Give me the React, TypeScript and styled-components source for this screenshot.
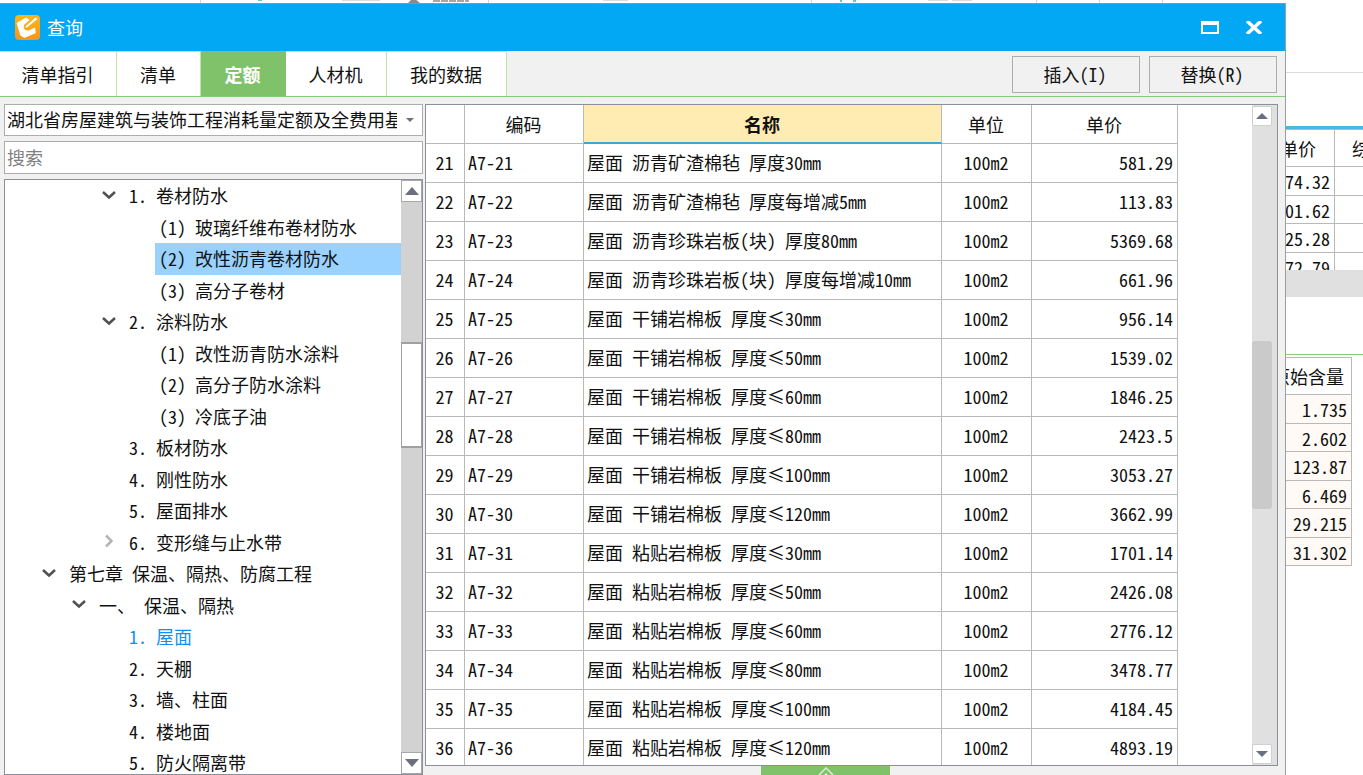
import React from 'react';
import styled, { createGlobalStyle, css } from 'styled-components';

const Global = createGlobalStyle`
  * { box-sizing: border-box; }
  body { margin: 0; background: #fff; overflow: hidden; }
  body, button, input, select, table {
    font-family: "Noto Sans CJK SC", "Liberation Sans", sans-serif;
    font-size: 18px;
    line-height: 24px;
    color: #111;
  }
`;

const Page = styled.div`
  display: grid;
  grid-template-columns: minmax(0, 1fr) 77px;
  grid-template-rows: 3px minmax(0, 1fr);
  height: 100vh;
`;

const Ribbon = styled.div`
  grid-column: 1 / -1;
  overflow: hidden;
  svg { display: block; }
`;

/* ---------- text with half-width latin ---------- */

const Latin = styled.span`
  font-feature-settings: "hwid";
  white-space: pre;
`;

function Mixed({ children }: { children: string }) {
  const runs = children.match(/[\x20-\x7e]+|[^\x20-\x7e]+/g) ?? [];
  return <>{runs.map((r, i) => (/^[\x20-\x7e]/.test(r) ? <Latin key={i}>{r}</Latin> : r))}</>;
}

/* ---------- query window ---------- */

const Window = styled.main`
  display: flex;
  flex-direction: column;
  min-width: 0;
  overflow: hidden;
  background: #f1f1f1;
  border-top: 1px solid #8796a3;
  border-right: 1px solid #9a9fa5;
`;

const TitleBar = styled.header`
  flex: none;
  display: flex;
  align-items: center;
  gap: 7px;
  height: 47px;
  padding: 0 22px 0 15px;
  background: #02a8f3;
  color: #fff;
`;

const Title = styled.h1`
  flex: 1;
  margin: 0;
  padding-bottom: 2px;
  font-size: 18px;
  font-weight: 400;
`;

const WindowButton = styled.button`
  display: flex;
  padding: 0;
  margin-left: 19px;
  border: 0;
  background: none;
`;

const TabBar = styled.nav`
  flex: none;
  display: flex;
  height: 46px;
  padding-right: 8px;
  border-bottom: 1px solid #86cb78;
`;

const Tab = styled.button<{ $width: number; $active?: boolean }>`
  width: ${(p) => p.$width}px;
  padding: 0 1px 0 0;
  border: 0;
  border-top: 1px solid #b9e6a8;
  border-right: 1px solid #b9e6a8;
  background: #fff;
  ${(p) =>
    p.$active &&
    css`
      background: #7fc269;
      border-color: #7fc269;
      color: #fff;
      font-weight: 700;
    `}
`;

const Actions = styled.div`
  display: flex;
  gap: 9px;
  margin: 5px 0 3px auto;
`;

const Action = styled.button`
  width: 128px;
  padding: 0 2px 2px 0;
  border: 1px solid #adadad;
  background: #f1f1f1;
`;

const Body = styled.div`
  flex: 1;
  min-height: 0;
  display: flex;
  gap: 2px;
  padding: 7px 7px 0 4px;
`;

const Sidebar = styled.aside`
  flex: none;
  width: 419px;
  display: flex;
  flex-direction: column;
  gap: 5px;
`;

const SelectBox = styled.div`
  display: grid;
  align-items: center;
  background: #fff;
  border: 1px solid #adadad;
  > * { grid-area: 1 / 1; }
  svg { justify-self: end; margin-right: 8px; pointer-events: none; }
`;

const Select = styled.select`
  width: 100%;
  height: 30px;
  padding: 0 25px 2px 2px;
  border: 0;
  appearance: none;
  background: transparent;
`;

const Search = styled.input`
  height: 33px;
  padding: 0 2px 2px;
  border: 1px solid #adadad;
  border-radius: 0;
  background: #fff;
  &::placeholder { color: #808080; opacity: 1; }
`;

const TreePanel = styled.div`
  flex: 1;
  min-height: 0;
  display: flex;
  overflow: hidden;
  border: 1px solid #8b909c;
`;

const Tree = styled.ul`
  flex: 1;
  margin: 0;
  padding: 0;
  list-style: none;
  overflow: hidden;
  background: #fff;
`;

const TreeRow = styled.li<{ $level: number; $current?: boolean }>`
  display: flex;
  height: 31px;
  padding-left: ${(p) => p.$level * 30 + 37}px;
  color: ${(p) => (p.$current ? '#1090f5' : 'inherit')};
  &:nth-child(odd) { height: 32px; }
`;

const Toggle = styled.span`
  flex: none;
  width: 23px;
  display: flex;
  align-items: center;
  padding-bottom: 3px;
`;

const Label = styled.span<{ $selected?: boolean }>`
  flex: 1;
  padding: 3px 0 0 4px;
  white-space: nowrap;
  background: ${(p) => (p.$selected ? '#99d1ff' : 'transparent')};
`;

const TreeScroll = styled.div`
  flex: none;
  width: 21px;
  display: flex;
  flex-direction: column;
  background: #d2d2d2;
`;

const TreeArrow = styled.button`
  display: grid;
  place-items: center;
  height: 22px;
  padding: 0;
  border: 1px solid #a8a8a8;
  background: #fff;
`;

const TreeThumb = styled.div`
  height: 106px;
  margin: 140px 0 auto;
  background: #fff;
  border: 1px solid #a0a0a0;
  border-width: 2px 1px;
`;

const Main = styled.section`
  flex: 1;
  min-width: 0;
  display: flex;
  flex-direction: column;
`;

const TablePanel = styled.div`
  flex: 1;
  min-height: 0;
  display: flex;
  overflow: hidden;
  background: #fff;
  border: 1px solid #8b909c;
`;

const TableArea = styled.div`
  flex: 1;
  min-width: 0;
  overflow: hidden;
  padding-right: 74px;
`;

const Table = styled.table`
  width: 100%;
  table-layout: fixed;
  border-collapse: separate;
  border-spacing: 0;
`;

const Head = styled.th<{ $sorted?: boolean }>`
  height: 39px;
  padding: 0 1px 0 0;
  font-weight: 400;
  border-right: 1px solid #b9b9b9;
  border-bottom: 1px solid #b9b9b9;
  ${(p) =>
    p.$sorted &&
    css`
      font-weight: 700;
      background: #ffecb3;
      border-bottom: 2px solid #36a9d8;
    `}
`;

const Cell = styled.td<{ $align?: string }>`
  height: 39px;
  padding: 0 4px 2px 3px;
  overflow: hidden;
  white-space: nowrap;
  text-align: ${(p) => p.$align ?? 'left'};
  border-right: 1px solid #b9b9b9;
  border-bottom: 1px solid #b9b9b9;
`;

const TableScroll = styled.div`
  flex: none;
  width: 25px;
  display: flex;
  flex-direction: column;
  padding: 1px 5px 1px 0;
  background: #e0e0e0;
`;

const TableArrow = styled.button`
  display: grid;
  place-items: center;
  height: 20px;
  padding: 0;
  border: 1px solid #d0d0d0;
  border-radius: 2px;
  background: #fff;
`;

const TableThumb = styled.div`
  height: 168px;
  margin: 215px 0 auto;
  border-radius: 3px;
  background: #cacaca;
`;

const Expander = styled.button`
  flex: none;
  display: flex;
  justify-content: center;
  width: 129px;
  height: 9px;
  margin-left: 336px;
  padding: 1px 0 0;
  border: 0;
  overflow: hidden;
  background: #7fc269;
  svg { flex: none; }
`;

/* ---------- project page behind ---------- */

const Behind = styled.aside`
  display: flex;
  flex-direction: column;
  overflow: hidden;
`;

const Blank = styled.div<{ $height: number; $line?: string }>`
  flex: none;
  height: ${(p) => p.$height}px;
  border-bottom: ${(p) => (p.$line ? `1px solid ${p.$line}` : 'none')};
`;

const Clip = styled.div<{ $height?: number; $accent?: boolean }>`
  flex: none;
  height: ${(p) => (p.$height ? `${p.$height}px` : 'auto')};
  display: flex;
  align-items: flex-start;
  overflow: hidden;
  border-top: ${(p) => (p.$accent ? '3px solid #4bb8e2' : 'none')};
`;

const PriceTable = styled.table`
  flex: none;
  width: 120px;
  margin-left: -71px;
  table-layout: fixed;
  border-collapse: separate;
  border-spacing: 0;
  border-top: 1px solid #b9b9b9;
`;

const AmountTable = styled(PriceTable)`
  margin-left: -54px;
`;

const RestTable = styled(PriceTable)`
  margin-left: 0;
`;

const SideHead = styled.th<{ $pad: number }>`
  height: 37px;
  padding: 0 ${(p) => p.$pad}px 0 0;
  text-align: right;
  white-space: nowrap;
  font-weight: 400;
  border-right: 1px solid #b9b9b9;
  border-bottom: 1px solid #b9b9b9;
`;

const SideCell = styled.td<{ $tint?: boolean }>`
  height: 29px;
  padding: 0 4px;
  text-align: right;
  border-right: 1px solid #b9b9b9;
  border-bottom: 1px solid #b9b9b9;
  background: ${(p) => (p.$tint ? '#fffaf5' : '#fff')};
  tr:nth-child(even) > & { height: 28px; }
`;

const GreyBand = styled.div`
  flex: none;
  height: 27px;
  background: #e0e0e0;
`;

/* ---------- data ---------- */

type Node = { level: number; text: string; open?: boolean; closed?: boolean; selected?: boolean; current?: boolean };

const nodes: Node[] = [
  { level: 2, text: '1. 卷材防水', open: true },
  { level: 3, text: '(1) 玻璃纤维布卷材防水' },
  { level: 3, text: '(2) 改性沥青卷材防水', selected: true },
  { level: 3, text: '(3) 高分子卷材' },
  { level: 2, text: '2. 涂料防水', open: true },
  { level: 3, text: '(1) 改性沥青防水涂料' },
  { level: 3, text: '(2) 高分子防水涂料' },
  { level: 3, text: '(3) 冷底子油' },
  { level: 2, text: '3. 板材防水' },
  { level: 2, text: '4. 刚性防水' },
  { level: 2, text: '5. 屋面排水' },
  { level: 2, text: '6. 变形缝与止水带', closed: true },
  { level: 0, text: '第七章 保温、隔热、防腐工程', open: true },
  { level: 1, text: '一、 保温、隔热', open: true },
  { level: 2, text: '1. 屋面', current: true },
  { level: 2, text: '2. 天棚' },
  { level: 2, text: '3. 墙、柱面' },
  { level: 2, text: '4. 楼地面' },
  { level: 2, text: '5. 防火隔离带' },
];

const items: [string, string][] = [
  ['屋面 沥青矿渣棉毡 厚度30mm', '581.29'],
  ['屋面 沥青矿渣棉毡 厚度每增减5mm', '113.83'],
  ['屋面 沥青珍珠岩板(块) 厚度80mm', '5369.68'],
  ['屋面 沥青珍珠岩板(块) 厚度每增减10mm', '661.96'],
  ['屋面 干铺岩棉板 厚度≤30mm', '956.14'],
  ['屋面 干铺岩棉板 厚度≤50mm', '1539.02'],
  ['屋面 干铺岩棉板 厚度≤60mm', '1846.25'],
  ['屋面 干铺岩棉板 厚度≤80mm', '2423.5'],
  ['屋面 干铺岩棉板 厚度≤100mm', '3053.27'],
  ['屋面 干铺岩棉板 厚度≤120mm', '3662.99'],
  ['屋面 粘贴岩棉板 厚度≤30mm', '1701.14'],
  ['屋面 粘贴岩棉板 厚度≤50mm', '2426.08'],
  ['屋面 粘贴岩棉板 厚度≤60mm', '2776.12'],
  ['屋面 粘贴岩棉板 厚度≤80mm', '3478.77'],
  ['屋面 粘贴岩棉板 厚度≤100mm', '4184.45'],
  ['屋面 粘贴岩棉板 厚度≤120mm', '4893.19'],
];

const prices = ['74.32', '201.62', '625.28', '272.79'];
const amounts = ['1.735', '2.602', '123.87', '6.469', '29.215', '31.302'];

/* ---------- icons ---------- */

const AppIcon = () => (
  <svg width="25" height="25" viewBox="0 0 25 25" aria-hidden="true">
    <defs>
      <linearGradient id="app" x1="0" y1="0" x2="0" y2="1">
        <stop offset="0" stopColor="#fdb813" />
        <stop offset="1" stopColor="#f7931e" />
      </linearGradient>
    </defs>
    <rect width="25" height="25" rx="4" fill="url(#app)" />
    <path
      d="M2.500 8.500 11 3.500l2.500 1.500-5.500 5 1.500 5.500 4 1 6-3 .5 4L9.500 22 6 20z"
      fill="#fff"
      stroke="#fff"
      strokeWidth="1.500"
      strokeLinejoin="round"
    />
    <path d="M9.500 13.500 10.500 10.500 20.500 1.500l3 2.500L13 12.500z" fill="#fff" stroke="#fbaa18" strokeWidth="1.200" />
  </svg>
);

const Triangle = ({ up, w = 14, h = 8, fill = '#6b6f80' }: { up?: boolean; w?: number; h?: number; fill?: string }) => (
  <svg width={w} height={h} viewBox="0 0 14 8" preserveAspectRatio="none" aria-hidden="true">
    <path d={up ? 'M0 8 7 0l7 8z' : 'M0 0h14L7 8z'} fill={fill} />
  </svg>
);

const Chevron = ({ closed }: { closed?: boolean }) => (
  <svg width="14" height="14" viewBox="0 0 14 14" fill="none" strokeWidth="2.500" aria-hidden="true">
    {closed ? <path d="M4 1.500 9.500 7 4 12.500" stroke="#b4b4b4" /> : <path d="M1 4l6 5.500L13 4" stroke="#505050" />}
  </svg>
);

export default function App() {
  return (
    <Page>
      <Global />
      <Ribbon>
        <svg width="1363" height="3" viewBox="0 0 1363 3" aria-hidden="true">
          <path d="M200.500 0v3M488.500 0v3M811.500 0v3M1036.500 0v3M1099.500 0v3M1162.500 0v3" stroke="#d4d4d4" />
          <path d="M258 0h4M840 1h2M853 1h3" stroke="#5cc8ee" strokeWidth="2" />
          <path d="M342 0h38M603 0h25M928 0h20M952 0h20" stroke="#d5dde2" strokeWidth="2" />
          <path d="M408 3l4-4h3l5 4z" fill="#8a8a8a" />
          <path d="M433 1h36" stroke="#b0a49c" strokeWidth="2" strokeDasharray="7 1" />
        </svg>
      </Ribbon>
      <Window>
        <TitleBar>
          <AppIcon />
          <Title>查询</Title>
          <WindowButton aria-label="最大化">
            <svg width="18" height="13" viewBox="0 0 18 13"><path d="M1 1h16v11H1z" fill="none" stroke="#fff" strokeWidth="2" /><path d="M0 0h18v4H0z" fill="#fff" /></svg>
          </WindowButton>
          <WindowButton aria-label="关闭">
            <svg width="18" height="13" viewBox="0 0 18 13"><path d="M2 0 16 13M16 0 2 13" stroke="#fff" strokeWidth="3.500" /></svg>
          </WindowButton>
        </TitleBar>
        <TabBar>
          <Tab $width={117}>清单指引</Tab>
          <Tab $width={84}>清单</Tab>
          <Tab $width={85} $active>定额</Tab>
          <Tab $width={101}>人材机</Tab>
          <Tab $width={120}>我的数据</Tab>
          <Actions>
            <Action><Mixed>插入(I)</Mixed></Action>
            <Action><Mixed>替换(R)</Mixed></Action>
          </Actions>
        </TabBar>
        <Body>
          <Sidebar>
            <SelectBox>
              <Select aria-label="定额库">
                <option>湖北省房屋建筑与装饰工程消耗量定额及全费用基价表</option>
              </Select>
              <Triangle w={8} h={4} />
            </SelectBox>
            <Search aria-label="搜索" placeholder="搜索" />
            <TreePanel>
              <Tree>
                {nodes.map((n, i) => (
                  <TreeRow key={i} $level={n.level} $current={n.current}>
                    <Toggle>{(n.open || n.closed) && <Chevron closed={n.closed} />}</Toggle>
                    <Label $selected={n.selected}><Mixed>{n.text}</Mixed></Label>
                  </TreeRow>
                ))}
              </Tree>
              <TreeScroll>
                <TreeArrow aria-label="向上滚动"><Triangle up /></TreeArrow>
                <TreeThumb />
                <TreeArrow aria-label="向下滚动"><Triangle /></TreeArrow>
              </TreeScroll>
            </TreePanel>
          </Sidebar>
          <Main>
            <TablePanel>
              <TableArea>
                <Table>
                  <colgroup>
                    <col style={{ width: 39 }} />
                    <col style={{ width: 119 }} />
                    <col />
                    <col style={{ width: 90 }} />
                    <col style={{ width: 146 }} />
                  </colgroup>
                  <thead>
                    <tr>
                      <Head aria-label="序号" />
                      <Head>编码</Head>
                      <Head $sorted>名称</Head>
                      <Head>单位</Head>
                      <Head>单价</Head>
                    </tr>
                  </thead>
                  <tbody>
                    {items.map(([name, price], i) => (
                      <tr key={i}>
                        <Cell $align="center"><Mixed>{String(21 + i)}</Mixed></Cell>
                        <Cell><Mixed>{`A7-${21 + i}`}</Mixed></Cell>
                        <Cell><Mixed>{name}</Mixed></Cell>
                        <Cell $align="center"><Mixed>100m2</Mixed></Cell>
                        <Cell $align="right"><Mixed>{price}</Mixed></Cell>
                      </tr>
                    ))}
                  </tbody>
                </Table>
              </TableArea>
              <TableScroll>
                <TableArrow aria-label="向上滚动"><Triangle up w={12} h={6} /></TableArrow>
                <TableThumb />
                <TableArrow aria-label="向下滚动"><Triangle w={12} h={6} /></TableArrow>
              </TableScroll>
            </TablePanel>
            <Expander aria-label="展开">
              <svg width="16" height="12" viewBox="0 0 16 12"><path d="M1 8l7-7 7 7" fill="none" stroke="#d8f0cf" strokeWidth="1.500" /><path d="M3 12l5-6 5 6z" fill="#fff" /></svg>
            </Expander>
          </Main>
        </Body>
      </Window>
      <Behind>
        <Blank $height={70} $line="#dcdcdc" />
        <Blank $height={53} />
        <Clip $height={144} $accent>
          <PriceTable>
            <thead><tr><SideHead $pad={18}>单价</SideHead></tr></thead>
            <tbody>{prices.map((p) => <tr key={p}><SideCell><Mixed>{p}</Mixed></SideCell></tr>)}</tbody>
          </PriceTable>
          <RestTable>
            <thead><tr><SideHead $pad={30}>综合单价</SideHead></tr></thead>
            <tbody>{prices.map((p) => <tr key={p}><SideCell /></tr>)}</tbody>
          </RestTable>
        </Clip>
        <GreyBand />
        <Blank $height={58} $line="#86cb78" />
        <Blank $height={2} />
        <Clip>
          <AmountTable>
            <thead><tr><SideHead $pad={7}>原始含量</SideHead></tr></thead>
            <tbody>{amounts.map((a) => <tr key={a}><SideCell $tint><Mixed>{a}</Mixed></SideCell></tr>)}</tbody>
          </AmountTable>
        </Clip>
      </Behind>
    </Page>
  );
}
